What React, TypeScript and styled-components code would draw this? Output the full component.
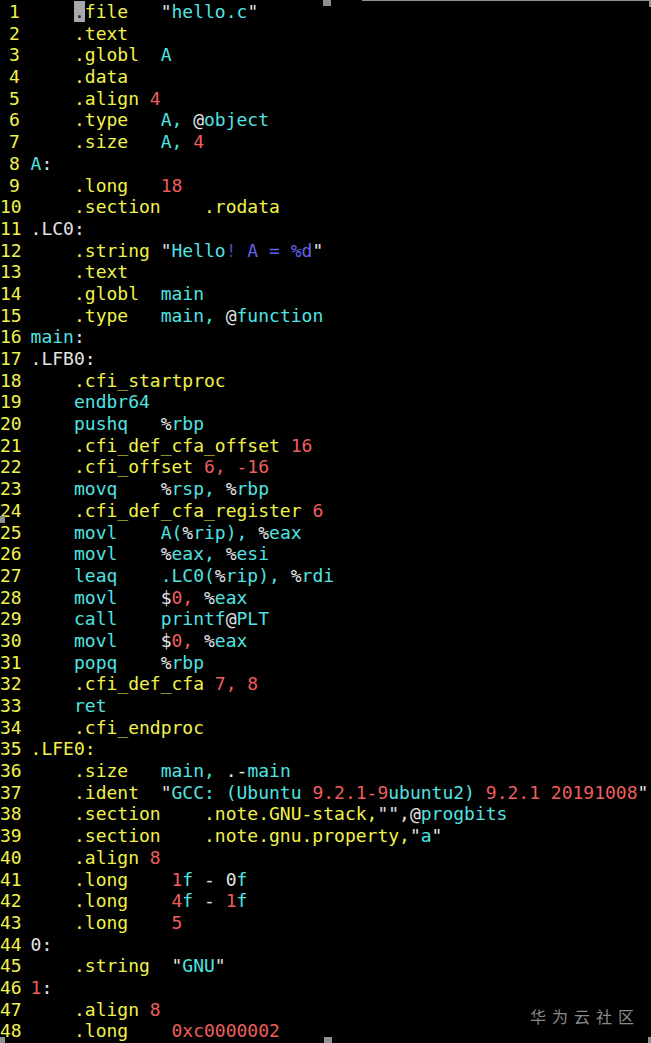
import React from "react";
import styled, { createGlobalStyle } from "styled-components";

const GlobalStyle = createGlobalStyle`
  html, body { margin: 0; padding: 0; background: #000; }
  body { overflow: hidden; }
`;

const COLORS = {
  y: "#f2f24c",
  c: "#52e2e2",
  r: "#ee5e5e",
  w: "#e4e4e4",
  b: "#6262e8",
  d: "#4a4ab8",
} as const;

type Tone = keyof typeof COLORS;
type Seg = [string, Tone | "cur"];

const CELL = 10.84;

const Screen = styled.div`
  position: relative;
  width: 651px;
  height: 1043px;
  background: #000;
  overflow: hidden;
`;

const Buffer = styled.pre`
  margin: 0;
  padding: 1px 0 0 0;
  font-family: "DejaVu Sans Mono", monospace;
  font-size: 18px;
  line-height: 21.7px;
  white-space: pre;
  color: #e4e4e4;
`;

const Row = styled.div`
  height: 21.7px;
  display: flex;
`;

const LineNo = styled.span`
  flex: 0 0 auto;
  box-sizing: border-box;
  width: ${3 * CELL - 1.9}px;
  padding-right: ${CELL}px;
  text-align: right;
  color: ${COLORS.y};
`;

const Code = styled.span`
  flex: 0 0 auto;
`;

const Tok = styled.span<{ $tone: Tone }>`
  color: ${(p) => COLORS[p.$tone]};
`;

const Cursor = styled.span`
  background: #a8a8ae;
  color: #1a1a1a;
`;

const Watermark = styled.div`
  position: absolute;
  left: 530px;
  top: 1008px;
  font-family: "Noto Sans CJK SC", "Noto Sans", sans-serif;
  font-size: 16px;
  line-height: 1;
  letter-spacing: 6px;
  color: #8a8a8a;
`;

const Handle = styled.span<{ $l: number; $t: number; $w: number; $h: number }>`
  position: absolute;
  left: ${(p) => p.$l}px;
  top: ${(p) => p.$t}px;
  width: ${(p) => p.$w}px;
  height: ${(p) => p.$h}px;
  background: #8f8f8f;
`;

const lines: Seg[][] = [
  [["\t", "y"], [".", "cur"], ["file\t", "y"], ['"', "w"], ["hello.c", "c"], ['"', "w"]],
  [["\t.text", "y"]],
  [["\t.globl\t", "y"], ["A", "c"]],
  [["\t.data", "y"]],
  [["\t.align ", "y"], ["4", "r"]],
  [["\t.type\t", "y"], ["A, ", "c"], ["@", "w"], ["object", "c"]],
  [["\t.size\t", "y"], ["A, ", "c"], ["4", "r"]],
  [["A", "c"], [":", "w"]],
  [["\t.long\t", "y"], ["18", "r"]],
  [["\t.section\t.rodata", "y"]],
  [[".LC0:", "w"]],
  [["\t.string\t", "y"], ['"', "w"], ["Hello", "c"], ["!", "d"], [" A = %d", "b"], ['"', "w"]],
  [["\t.text", "y"]],
  [["\t.globl\t", "y"], ["main", "c"]],
  [["\t.type\t", "y"], ["main, ", "c"], ["@", "w"], ["function", "c"]],
  [["main", "c"], [":", "w"]],
  [[".LFB0:", "w"]],
  [["\t.cfi_startproc", "y"]],
  [["\tendbr64", "c"]],
  [["\tpushq\t", "c"], ["%", "w"], ["rbp", "c"]],
  [["\t.cfi_def_cfa_offset ", "y"], ["16", "r"]],
  [["\t.cfi_offset ", "y"], ["6, -16", "r"]],
  [["\tmovq\t", "c"], ["%", "w"], ["rsp, ", "c"], ["%", "w"], ["rbp", "c"]],
  [["\t.cfi_def_cfa_register ", "y"], ["6", "r"]],
  [["\tmovl\tA(", "c"], ["%", "w"], ["rip), ", "c"], ["%", "w"], ["eax", "c"]],
  [["\tmovl\t", "c"], ["%", "w"], ["eax, ", "c"], ["%", "w"], ["esi", "c"]],
  [["\tleaq\t.LC0(", "c"], ["%", "w"], ["rip), ", "c"], ["%", "w"], ["rdi", "c"]],
  [["\tmovl\t", "c"], ["$", "w"], ["0, ", "r"], ["%", "w"], ["eax", "c"]],
  [["\tcall\tprintf", "c"], ["@", "w"], ["PLT", "c"]],
  [["\tmovl\t", "c"], ["$", "w"], ["0, ", "r"], ["%", "w"], ["eax", "c"]],
  [["\tpopq\t", "c"], ["%", "w"], ["rbp", "c"]],
  [["\t.cfi_def_cfa ", "y"], ["7, 8", "r"]],
  [["\tret", "c"]],
  [["\t.cfi_endproc", "y"]],
  [[".LFE0:", "y"]],
  [["\t.size\t", "y"], ["main, ", "c"], [".-", "w"], ["main", "c"]],
  [
    ["\t.ident\t", "y"],
    ['"', "w"],
    ["GCC: (Ubuntu ", "c"],
    ["9.2.1-9", "r"],
    ["ubuntu2) ", "c"],
    ["9.2.1 20191008", "r"],
    ['"', "w"],
  ],
  [["\t.section\t.note.GNU-stack,", "y"], ['"",@', "w"], ["progbits", "c"]],
  [["\t.section\t.note.gnu.property,", "y"], ['"', "w"], ["a", "c"], ['"', "w"]],
  [["\t.align ", "y"], ["8", "r"]],
  [["\t.long\t ", "y"], ["1", "r"], ["f", "c"], [" - 0", "w"], ["f", "c"]],
  [["\t.long\t ", "y"], ["4", "r"], ["f", "c"], [" - ", "w"], ["1", "r"], ["f", "c"]],
  [["\t.long\t ", "y"], ["5", "r"]],
  [["0:", "w"]],
  [["\t.string\t ", "y"], ['"', "w"], ["GNU", "c"], ['"', "w"]],
  [["1", "r"], [":", "w"]],
  [["\t.align ", "y"], ["8", "r"]],
  [["\t.long\t ", "y"], ["0xc0000002", "r"]],
];

function expandTabs(segs: Seg[]): Seg[] {
  let col = 0;
  return segs.map(([text, tone]) => {
    let out = "";
    for (const ch of text) {
      if (ch === "\t") {
        const n = 4 - (col % 4);
        out += " ".repeat(n);
        col += n;
      } else {
        out += ch;
        col += 1;
      }
    }
    return [out, tone] as Seg;
  });
}

const handles = [
  { l: 323, t: 0, w: 8, h: 6 },
  { l: 649, t: 0, w: 2, h: 7 },
  { l: 362, t: 0, w: 289, h: 1 },
  { l: 0, t: 516, w: 5, h: 7 },
  { l: 0, t: 1037, w: 5, h: 6 },
  { l: 324, t: 1037, w: 8, h: 6 },
  { l: 648, t: 1037, w: 3, h: 6 },
];

export default function App() {
  return (
    <>
      <GlobalStyle />
      <Screen>
        <Buffer>
          {lines.map((segs, i) => (
            <Row key={i}>
              <LineNo>{String(i + 1)}</LineNo>
              <Code>
                {expandTabs(segs).map(([text, tone], j) =>
                  tone === "cur" ? (
                    <Cursor key={j}>{text}</Cursor>
                  ) : (
                    <Tok key={j} $tone={tone}>
                      {text}
                    </Tok>
                  )
                )}
              </Code>
            </Row>
          ))}
        </Buffer>
        {handles.map((h, i) => (
          <Handle key={i} $l={h.l} $t={h.t} $w={h.w} $h={h.h} />
        ))}
        <Watermark>华为云社区</Watermark>
      </Screen>
    </>
  );
}
